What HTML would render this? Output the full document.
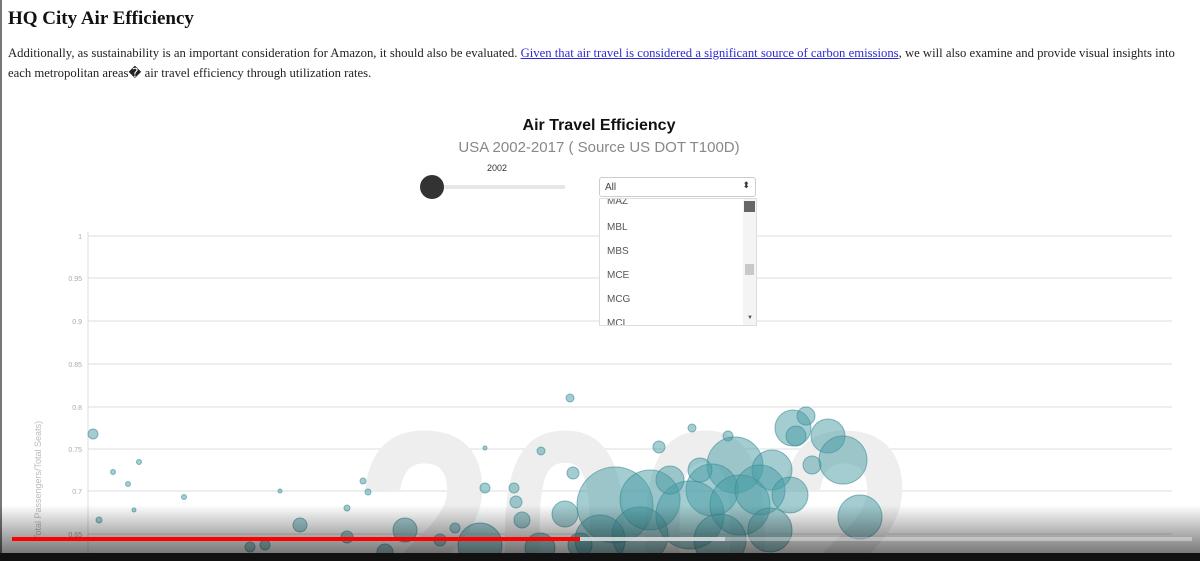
<!DOCTYPE html>
<html><head><meta charset="utf-8"><style>
html,body{margin:0;width:1200px;height:561px;overflow:hidden}
body{background:#fff;position:relative;font-family:"Liberation Serif",serif}
.lb{position:absolute;left:0;top:0;width:2px;height:561px;background:#777}
h1{position:absolute;left:8px;top:8px;margin:0;font-size:19px;font-weight:bold;color:#111}
p{position:absolute;left:8px;top:43px;margin:0;font-size:12.7px;line-height:20px;color:#222;width:1190px;white-space:nowrap}
a{color:#2b2bd8}
.ss{font-family:"Liberation Sans",sans-serif}
</style></head><body>
<div class="lb"></div>
<h1>HQ City Air Efficiency</h1>
<p>Additionally, as sustainability is an important consideration for Amazon, it should also be evaluated. <a href="#">Given that air travel is considered a significant source of carbon emissions</a>, we will also examine and provide visual insights into<br>each metropolitan areas� air travel efficiency through utilization rates.</p>
<svg width="1200" height="561" style="position:absolute;left:0;top:0;overflow:hidden" font-family="Liberation Sans, sans-serif">
<text x="599" y="130" text-anchor="middle" font-size="16" font-weight="bold" fill="#111">Air Travel Efficiency</text>
<text x="599" y="152" text-anchor="middle" font-size="15" fill="#888">USA 2002-2017 ( Source US DOT T100D)</text>
<text x="497" y="171" text-anchor="middle" font-size="9" fill="#333">2002</text>
<rect x="432" y="185" width="133" height="4" fill="#e6e6e6"/>
<circle cx="432" cy="187" r="12" fill="#333"/>
<g stroke="#e8e8e8" stroke-width="1.5">
<line x1="88" y1="236" x2="1172" y2="236"/><line x1="88" y1="278" x2="1172" y2="278"/>
<line x1="88" y1="321" x2="1172" y2="321"/><line x1="88" y1="364" x2="1172" y2="364"/>
<line x1="88" y1="407" x2="1172" y2="407"/><line x1="88" y1="449" x2="1172" y2="449"/>
<line x1="88" y1="491" x2="1172" y2="491"/><line x1="88" y1="534" x2="1172" y2="534"/>
</g>
<line x1="88" y1="232" x2="88" y2="561" stroke="#ddd"/>
<g font-size="7" fill="#aaa" text-anchor="end">
<text x="82" y="239">1</text><text x="82" y="281">0.95</text><text x="82" y="324">0.9</text><text x="82" y="367">0.85</text><text x="82" y="410">0.8</text><text x="82" y="452">0.75</text><text x="82" y="494">0.7</text><text x="82" y="537">0.65</text>
</g>
<text transform="translate(41,540) rotate(-90)" font-size="9" fill="#bbb">Total Passengers/Total Seats)</text>
<text x="355" y="640" textLength="560" lengthAdjust="spacingAndGlyphs" font-size="300" font-weight="bold" fill="#eeeeee">2002</text>
<g fill="rgba(72,156,164,0.5)" stroke="rgba(60,140,150,0.6)" stroke-width="1">
<circle cx="93" cy="434" r="5"/><circle cx="113" cy="472" r="2.5"/><circle cx="128" cy="484" r="2.5"/><circle cx="139" cy="462" r="2.5"/><circle cx="99" cy="520" r="3"/><circle cx="134" cy="510" r="2"/><circle cx="184" cy="497" r="2.5"/><circle cx="280" cy="491" r="2"/><circle cx="363" cy="481" r="3"/><circle cx="368" cy="492" r="3"/><circle cx="347" cy="508" r="3"/><circle cx="485" cy="448" r="2"/><circle cx="541" cy="451" r="4"/><circle cx="570" cy="398" r="4"/><circle cx="573" cy="473" r="6"/><circle cx="659" cy="447" r="6"/><circle cx="692" cy="428" r="4"/><circle cx="728" cy="436" r="5"/>
<circle cx="485" cy="488" r="5"/><circle cx="514" cy="488" r="5"/><circle cx="516" cy="502" r="6"/><circle cx="522" cy="520" r="8"/><circle cx="405" cy="530" r="12"/><circle cx="480" cy="545" r="22"/><circle cx="540" cy="548" r="15"/><circle cx="300" cy="525" r="7"/><circle cx="250" cy="547" r="5"/><circle cx="265" cy="545" r="5"/><circle cx="347" cy="537" r="6"/><circle cx="385" cy="552" r="8"/><circle cx="440" cy="540" r="6"/><circle cx="455" cy="528" r="5"/><circle cx="565" cy="514" r="13"/>
<circle cx="793" cy="428" r="18"/><circle cx="806" cy="416" r="9"/><circle cx="796" cy="436" r="10"/><circle cx="828" cy="436" r="17"/><circle cx="843" cy="460" r="24"/><circle cx="812" cy="465" r="9"/><circle cx="735" cy="465" r="28"/><circle cx="712" cy="490" r="26"/><circle cx="860" cy="517" r="22"/><circle cx="772" cy="470" r="20"/>
<circle cx="615" cy="505" r="38"/><circle cx="650" cy="500" r="30"/><circle cx="690" cy="515" r="34"/><circle cx="740" cy="505" r="30"/><circle cx="760" cy="490" r="25"/><circle cx="640" cy="535" r="28"/><circle cx="720" cy="540" r="26"/><circle cx="770" cy="530" r="22"/><circle cx="600" cy="540" r="25"/><circle cx="790" cy="495" r="18"/><circle cx="670" cy="480" r="14"/><circle cx="700" cy="470" r="12"/><circle cx="580" cy="545" r="12"/>
</g>
<defs><linearGradient id="g" x1="0" y1="0" x2="0" y2="1"><stop offset="0" stop-color="#000" stop-opacity="0"/><stop offset="1" stop-color="#000" stop-opacity="0.55"/></linearGradient></defs>
<rect x="0" y="505" width="1200" height="50" fill="url(#g)"/>
<rect x="12" y="537" width="1180" height="4" fill="rgba(255,255,255,0.35)"/>
<rect x="580" y="537" width="145" height="4" fill="rgba(220,220,220,0.8)"/>
<rect x="12" y="537" width="568" height="4" fill="#f00"/>
<rect x="0" y="553" width="1200" height="8" fill="#111"/>
</svg>
<div class="ss" style="position:absolute;left:599px;top:177px;width:157px;height:20px;border:1px solid #ccc;border-radius:3px;background:#fff;font-size:10px;color:#444;box-sizing:border-box;padding:4px 5px">All<span style="position:absolute;right:5px;top:2px;font-size:9px;color:#333">⬍</span></div>
<div class="ss" style="position:absolute;left:599px;top:198px;width:158px;height:128px;border:1px solid #ddd;background:#fff;box-sizing:border-box;overflow:hidden;font-size:10px;color:#555">
<div style="position:absolute;left:7px;top:-3px">MAZ</div>
<div style="position:absolute;left:7px;top:23px">MBL</div>
<div style="position:absolute;left:7px;top:47px">MBS</div>
<div style="position:absolute;left:7px;top:71px">MCE</div>
<div style="position:absolute;left:7px;top:95px">MCG</div>
<div style="position:absolute;left:7px;top:119px">MCI</div>
<div style="position:absolute;right:0;top:0;width:13px;height:126px;background:#f4f4f4"></div>
<div style="position:absolute;right:1px;top:2px;width:11px;height:11px;background:#666"></div>
<div style="position:absolute;right:2px;top:65px;width:9px;height:11px;background:#c8c8c8"></div>
<div style="position:absolute;right:3px;top:116px;font-size:6px;color:#555">▼</div>
</div>
</body></html>
